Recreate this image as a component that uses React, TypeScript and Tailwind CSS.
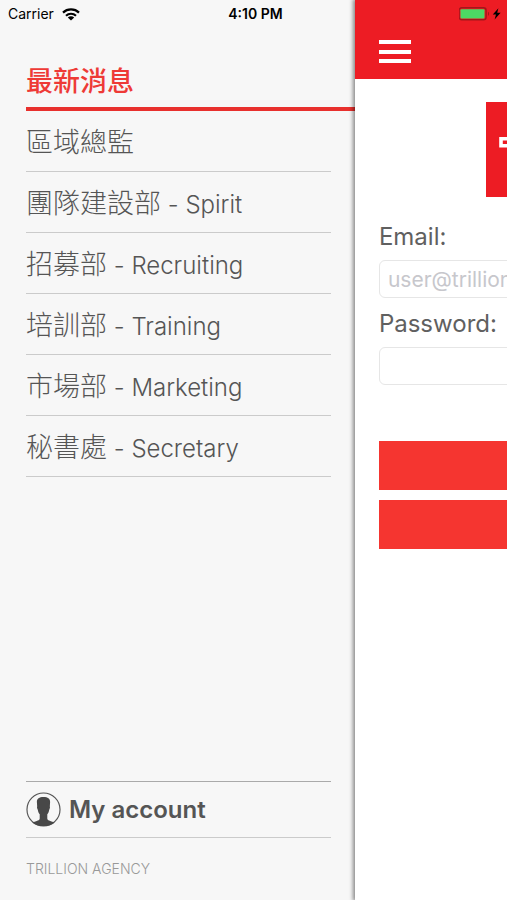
import React, { useState } from 'react';

interface MenuItem {
  id: string;
  label: string;
  english?: string;
}

const MENU_ITEMS: MenuItem[] = [
  { id: 'director', label: '區域總監' },
  { id: 'spirit', label: '團隊建設部', english: 'Spirit' },
  { id: 'recruiting', label: '招募部', english: 'Recruiting' },
  { id: 'training', label: '培訓部', english: 'Training' },
  { id: 'marketing', label: '市場部', english: 'Marketing' },
  { id: 'secretary', label: '秘書處', english: 'Secretary' },
];

const WifiIcon = () => (
  <svg viewBox="0 0 18 13" className="w-[18px] h-[13px]" fill="none" stroke="#000" strokeWidth="2.2">
    <path d="M1 4.6C5.4.4 12.6.4 17 4.6" />
    <path d="M4 7.7c2.8-2.6 7.2-2.6 10 0" />
    <path d="M9 12.6 5.8 9.5c1.8-1.6 4.6-1.6 6.4 0z" fill="#000" stroke="none" />
  </svg>
);

const BatteryIcon = () => (
  <svg viewBox="0 0 44 14" className="w-11 h-3.5">
    <rect x="0.1" y="0.8" width="27" height="12" rx="2.6" fill="none" stroke="#a3161b" strokeWidth="1.4" />
    <rect x="1.5" y="2.2" width="24" height="9.2" rx="1" fill="#4cd964" />
    <path d="M29 4.8c1.4.4 1.4 3.6 0 4z" fill="#a3161b" />
    <path d="M39.4 1.2 33.8 7.6h3.2L35.6 12.4l6-6.6h-3.4z" fill="#000" />
  </svg>
);

const AccountIcon = () => (
  <svg viewBox="0 0 36 36" className="w-[35px] h-[35px]">
    <circle cx="18" cy="18" r="17" fill="none" stroke="#555" strokeWidth="1.2" />
    <path
      d="M18 5.2c4.400 0 6.900 1.700 6.800 5.200l-.3 4.600c.4.500.1 2.200-.6 3.200-.4 2-1 3.600-2 4.800v4.200c0 1.800 2.600 2.600 7.900 4.100C26.700 33.800 22.600 35 18 35s-8.700-1.200-11.800-3.700c5.300-1.500 7.900-2.300 7.900-4.100V23c-1-1.200-1.600-2.800-2-4.800-.7-1-1-2.700-.6-3.200l-.3-4.600C11.100 6.900 13.600 5.200 18 5.200z"
      fill="#484848"
    />
  </svg>
);

const Logo = () => (
  <svg viewBox="0 0 245 95" className="block w-[245px] h-[95px]" role="img" aria-label="Trillion Agency">
    <rect width="245" height="95" fill="#ed1c24" />
    <path d="M15 36.8H230V43.800H15z" fill="none" stroke="#fff" strokeWidth="3.6" />
  </svg>
);

const StatusBar = () => (
  <div className="absolute inset-x-0 top-0 z-20 grid grid-cols-3 items-center h-7 pl-2 pr-1 text-sm text-black">
    <div className="flex items-center gap-2">
      <span>Carrier</span>
      <WifiIcon />
    </div>
    <span className="text-center font-semibold">4:10 PM</span>
    <div className="flex justify-end">
      <BatteryIcon />
    </div>
  </div>
);

const App: React.FC = () => {
  const [email, setEmail] = useState('');
  const [password, setPassword] = useState('');

  return (
    <div className="relative flex min-h-screen overflow-hidden bg-[#f7f7f7] font-['Inter','Noto_Sans_CJK_TC',sans-serif]">
      <StatusBar />

      {/* Drawer */}
      <aside className="flex flex-col w-[70%] shrink-0 pl-[26px] pt-14">
        <h2 className="flex items-center h-[55px] border-b-4 border-[#e8302d] text-[27px] leading-8 font-medium text-[#ee3a36]">
          最新消息
        </h2>
        <nav className="mr-6">
          {MENU_ITEMS.map((item) => (
            <a
              key={item.id}
              href={`#${item.id}`}
              className="flex items-center h-[61px] pt-1 border-b border-[#cbcbcb] text-[27px] leading-8 font-light text-[#555]"
            >
              <span className="whitespace-nowrap">
                {item.label}
                {item.english && <span className="text-2xl"> - {item.english}</span>}
              </span>
            </a>
          ))}
        </nav>

        <div className="mt-auto mr-6">
          <a
            href="#account"
            className="flex items-center gap-2 h-[57px] border-t border-b border-t-[#aaa] border-b-[#cbcbcb] text-2xl font-semibold text-[#555]"
          >
            <AccountIcon />
            My account
          </a>
          <p className="flex items-center h-[62px] text-sm font-light text-[#999]">TRILLION AGENCY</p>
        </div>
      </aside>

      {/* Page pushed aside by the drawer */}
      <main className="relative z-10 w-screen shrink-0 bg-white shadow-[-1px_0_4px_1px_rgba(0,0,0,0.45)]">
        <header className="h-[79px] pt-10 px-6 bg-[#ed1c24]">
          <button type="button" aria-label="Menu" className="flex flex-col justify-between w-8 h-[23px]">
            <span className="w-full h-1 bg-white" />
            <span className="w-full h-1 bg-white" />
            <span className="w-full h-1 bg-white" />
          </button>
        </header>

        <div className="flex flex-col px-6 pt-[23px]">
          <div className="self-center">
            <Logo />
          </div>

          <form className="flex flex-col pt-5" onSubmit={(e) => e.preventDefault()}>
            <label htmlFor="email" className="h-[43px] pt-1 text-2xl leading-8 text-[#606060]">
              Email:
            </label>
            <input
              id="email"
              type="email"
              value={email}
              onChange={(e) => setEmail(e.target.value)}
              placeholder="user@trillion.com"
              className="h-[38px] px-2 rounded-md border border-[#e6e6e6] bg-white text-[21px] text-[#555] placeholder:text-[#c7c7cc]"
            />
            <label htmlFor="password" className="h-[49px] pt-[10px] text-2xl leading-8 text-[#606060]">
              Password:
            </label>
            <input
              id="password"
              type="password"
              value={password}
              onChange={(e) => setPassword(e.target.value)}
              className="h-[38px] px-2 rounded-md border border-[#e6e6e6] bg-white text-[21px] text-[#555]"
            />

            <div className="flex flex-col gap-[10px] pt-14">
              <button type="submit" aria-label="Login" className="h-[49px] bg-[#f53530]" />
              <button type="button" aria-label="Register" className="h-[49px] bg-[#f53530]" />
            </div>
          </form>
        </div>
      </main>
    </div>
  );
};

export default App;
